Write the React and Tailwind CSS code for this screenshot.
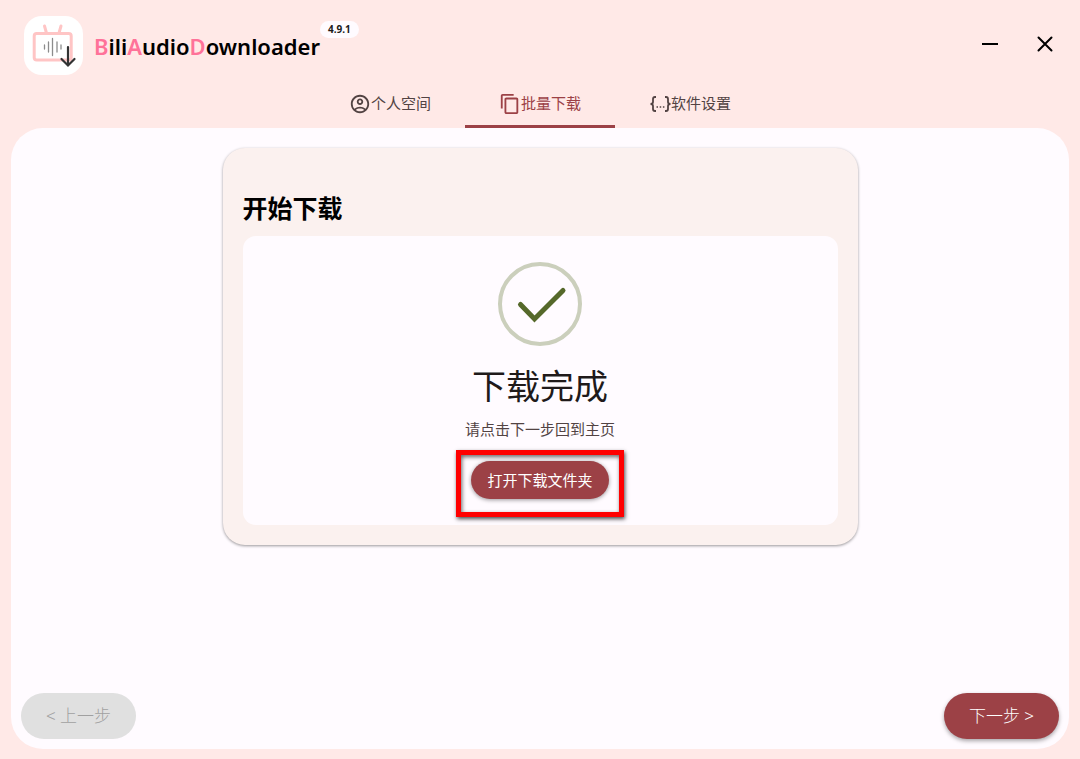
import { useState } from 'react';
import { MdContentCopy, MdOutlineAccountCircle } from 'react-icons/md';

const Logo = () => (
  <svg viewBox="0 0 59 59" className="w-[59px] h-[59px] shrink-0 rounded-[18px] bg-white" fill="none" strokeLinecap="round" aria-hidden="true">
    <g stroke="#ffc5c5" strokeWidth="3">
      <path d="M20.5 10l1.7 6M37 10l-1.7 6" />
      <rect x="10.2" y="17.5" width="37" height="26.5" rx="2.5" />
    </g>
    <path d="M20.5 29v4M24.5 26v10M28.5 22.5v17M33 26v10M37 29v4" stroke="#8c8c8c" strokeWidth="1.3" />
    <path d="M44 31v18M37.5 43l6.5 6.5 6.5-6.5" stroke="#333" strokeWidth="2.2" />
  </svg>
);

const BracesIcon = () => (
  <svg viewBox="0 0 22 22" className="w-[22px] h-[22px]" fill="none" stroke="currentColor" strokeWidth="1.8" aria-hidden="true">
    <path d="M7 4H6Q4 4 4 6V9Q4 11 1.5 11Q4 11 4 13V16Q4 18 6 18H7" />
    <path d="M16 4H17Q19 4 19 6V9Q19 11 21.5 11Q19 11 19 13V16Q19 18 17 18H16" />
    <path d="M7.5 14h1.5M10.7 14h1.5M13.9 14h1.5" strokeWidth="1.5" />
  </svg>
);

const tabs = [
  { id: 'space', label: '个人空间', icon: <MdOutlineAccountCircle size={22} /> },
  { id: 'batch', label: '批量下载', icon: <MdContentCopy size={22} /> },
  { id: 'settings', label: '软件设置', icon: <BracesIcon /> },
];

const Header = () => (
  <header className="flex items-start justify-between pt-4 pl-[13px] pr-3">
    <div className="flex items-center">
      <Logo />
      <h1 className="ml-[11px] text-[22px] leading-[30px] font-semibold text-black">
        <span className="text-[#ff7299]">B</span>ili<span className="text-[#ff7299]">A</span>udio<span className="text-[#ff7299]">D</span>ownloader
      </h1>
      <span className="self-start mt-[5px] h-[17px] px-2 rounded-full bg-[#fffbff] text-[10px] leading-[17px] font-bold text-[#201a1a]">4.9.1</span>
    </div>
    <div className="flex gap-[31px] pt-4 text-black">
      <button aria-label="最小化" className="w-6 h-6 flex items-center justify-center">
        <svg viewBox="0 0 24 24" className="w-6 h-6" stroke="currentColor" strokeWidth="2" aria-hidden="true"><path d="M4 12h16" /></svg>
      </button>
      <button aria-label="关闭" className="w-6 h-6 flex items-center justify-center">
        <svg viewBox="0 0 24 24" className="w-6 h-6" stroke="currentColor" strokeWidth="2" strokeLinecap="round" aria-hidden="true"><path d="M5.5 5.5l13 13M18.5 5.5l-13 13" /></svg>
      </button>
    </div>
  </header>
);

const DownloadCard = () => (
  <section className="w-full max-w-[635px] mx-auto rounded-[22px] bg-[#fbf1ef] px-5 pt-10 pb-5 shadow-[0_1px_3px_rgba(0,0,0,0.4)]">
    <h2 className="text-[25px] leading-10 font-bold text-black">开始下载</h2>
    <div className="mt-2 rounded-[13px] bg-[#fffbff] flex flex-col items-center pt-[25px] pb-[26px]">
      <svg viewBox="0 0 86 86" className="w-[86px] h-[86px]" fill="none" aria-hidden="true">
        <circle cx="43" cy="43" r="40" stroke="#cbcfbc" strokeWidth="4" />
        <path d="M23.5 43.5L37.5 58L66 29.5" stroke="#55682a" strokeWidth="5" strokeLinecap="round" />
      </svg>
      <h3 className="mt-4 text-[34px] leading-[46px] text-[#201a1a]">下载完成</h3>
      <p className="mt-[10px] text-[15px] leading-5 text-[#524343]">请点击下一步回到主页</p>
      <div className="relative mt-[22px]">
        <button className="block h-[38px] px-4 rounded-full bg-[#9c4146] text-white text-[15px] shadow-[0_1px_4px_rgba(0,0,0,0.4)]">打开下载文件夹</button>
        <div className="absolute -top-[11px] -bottom-[18px] -inset-x-[15px] border-[5px] border-[#ff0000] pointer-events-none shadow-[1px_2px_4px_rgba(0,0,0,0.7),inset_1px_2px_4px_rgba(0,0,0,0.6)]" />
      </div>
    </div>
  </section>
);

const App = () => {
  const [active, setActive] = useState('batch');

  return (
    <div className="min-h-screen flex flex-col bg-[#ffe9e7] px-[11px] pb-[10px] font-['Noto_Sans','Noto_Sans_CJK_SC',sans-serif]">
      <Header />

      <nav className="flex justify-center mt-[7px]">
        {tabs.map(tab => (
          <button
            key={tab.id}
            onClick={() => setActive(tab.id)}
            className={`w-[150px] h-[46px] flex items-center justify-center border-b-3 text-[15px] ${active === tab.id ? 'border-[#9c4146] text-[#9c4146]' : 'border-transparent text-[#524343]'}`}
          >
            {tab.icon}
            <span>{tab.label}</span>
          </button>
        ))}
      </nav>

      <main className="flex-1 flex flex-col rounded-[32px] bg-[#fffbff] px-[10px] pt-5 pb-[10px]">
        <DownloadCard />
        <div className="mt-auto flex justify-between text-[17px] font-light">
          <button disabled className="w-[115px] h-[46px] rounded-full bg-[#e0e0e0] text-[#a0a0a0]">&lt; 上一步</button>
          <button className="w-[115px] h-[46px] rounded-full bg-[#9c4146] text-white shadow-[0_2px_4px_rgba(0,0,0,0.35)]">下一步 &gt;</button>
        </div>
      </main>
    </div>
  );
};

export default App;
